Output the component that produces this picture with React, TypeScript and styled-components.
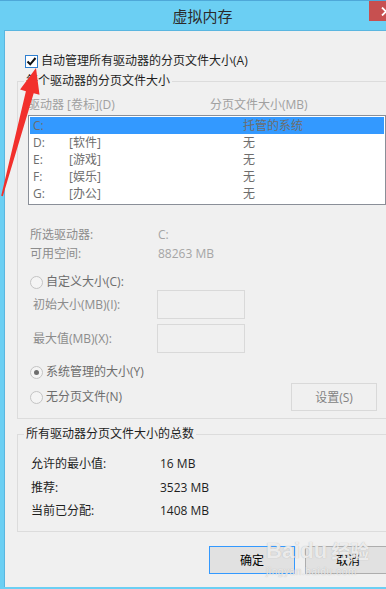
import React from 'react';
import styled, { createGlobalStyle } from 'styled-components';

const GlobalStyle = createGlobalStyle`
	html, body {
		margin: 0;
		padding: 0;
		width: 386px;
		height: 589px;
		overflow: hidden;
		background: #6bcff3;
	}
	body {
		font-family: 'Open Sans', 'Noto Sans CJK SC', sans-serif;
		font-size: 12px;
	}
`;

// the dialog is wider than the screenshot, so its right side is cut off
const Frame = styled.div`
	position: relative;
	width: 386px;
	height: 589px;
	overflow: hidden;
	box-sizing: border-box;
	background: #6bcff3;
	border-top: 1px solid #4ea8d8;
	padding: 0 0 2px 4px;
	display: flex;
	flex-direction: column;
`;

const TitleBar = styled.div`
	height: 29px;
	display: flex;
	align-items: flex-start;
	flex-shrink: 0;
`;

const Title = styled.div`
	flex: 1;
	padding-left: 32px;
	text-align: center;
	font-family: 'Noto Sans CJK SC', sans-serif;
	font-size: 15px;
	line-height: 29px;
	color: #2b2b2b;
`;

const CloseButton = styled.div`
	width: 17px;
	height: 20px;
	overflow: hidden;
	background: #c75050;
	display: flex;
	align-items: center;
	padding-left: 12px;
	box-sizing: border-box;
`;

const Client = styled.div`
	flex: 1;
	min-width: 0;
	overflow: hidden;
	background: #f0f0f0;
	border-top: 1px solid #5ab6e0;
	border-left: 1px solid #5ab6e0;
	padding-left: 12px;
	display: flex;
	flex-direction: column;
`;

const CheckRow = styled.div`
	margin: 22px 0 0 8px;
	height: 16px;
	display: flex;
	align-items: center;
	gap: 3px;
	line-height: 16px;
	color: #1e1e1e;
`;

const CheckBox = styled.span`
	width: 13px;
	height: 13px;
	box-sizing: border-box;
	border: 1px solid #2f7fd0;
	background: #fff;
	display: flex;
	align-items: center;
	justify-content: center;
`;

const Group = styled.fieldset<{ $top: number; $bottom: number }>`
	margin: ${(p) => p.$top}px 0 0 0;
	padding: 0 0 ${(p) => p.$bottom}px 0;
	border: 1px solid #dcdcdc;
	width: 378px;
	min-width: 378px;
	flex-shrink: 0;
	box-sizing: border-box;
	display: flex;
	flex-direction: column;
`;

const Legend = styled.legend`
	margin-left: 6px;
	padding: 0 2px;
	line-height: 16px;
	color: #1e1e1e;
`;

const ListHeader = styled.div`
	margin: 8px 0 0 10px;
	display: grid;
	grid-template-columns: 182px 1fr;
	line-height: 16px;
	color: #a0a0a0;
`;

const ListBox = styled.div`
	margin: 2px 0 0 10px;
	width: 358px;
	height: 90px;
	box-sizing: border-box;
	border: 1px solid #8a8f98;
	background: #fff;
	padding: 1px;
`;

const ListRow = styled.div<{ $selected?: boolean }>`
	height: 17px;
	line-height: 17px;
	padding-left: 3px;
	display: grid;
	grid-template-columns: 36px 174px 1fr;
	color: #6d6d6d;
	background: ${(p) => (p.$selected ? '#3399ff' : 'transparent')};
`;

const InfoRow = styled.div<{ $top: number; $width: number; $indent: number; $dark?: boolean }>`
	margin-top: ${(p) => p.$top}px;
	padding-left: ${(p) => p.$indent}px;
	display: grid;
	grid-template-columns: ${(p) => p.$width}px 1fr;
	line-height: 16px;
	color: ${(p) => (p.$dark ? '#1e1e1e' : '#8c8c8c')};
`;

const InfoValue = styled.span<{ $dark?: boolean }>`
	color: ${(p) => (p.$dark ? '#1e1e1e' : '#a5a5a5')};
`;

const RadioRow = styled.div<{ $top: number }>`
	margin-top: ${(p) => p.$top}px;
	padding-left: 12px;
	display: flex;
	align-items: center;
	gap: 3px;
	line-height: 16px;
	color: #6d6d6d;
`;

const Radio = styled.span<{ $checked?: boolean }>`
	width: 13px;
	height: 13px;
	box-sizing: border-box;
	border-radius: 50%;
	border: 1px solid #c4c4c4;
	background: #f4f4f4;
	display: flex;
	align-items: center;
	justify-content: center;

	&::after {
		content: '';
		display: ${(p) => (p.$checked ? 'block' : 'none')};
		width: 5px;
		height: 5px;
		border-radius: 50%;
		background: #6d6d6d;
	}
`;

const RadioLabel = styled.span`
	margin-left: 3px;
	line-height: 16px;
	color: #6d6d6d;
`;

const InputRow = styled.div<{ $top: number }>`
	margin-top: ${(p) => p.$top}px;
	padding-left: 15px;
	height: 29px;
	display: flex;
	align-items: center;
	color: #8c8c8c;
`;

const InputLabel = styled.span`
	width: 124px;
	line-height: 16px;
`;

const InputBox = styled.div`
	width: 88px;
	height: 29px;
	box-sizing: border-box;
	border: 1px solid #d9d9d9;
	background: #f0f0f0;
`;

const LastRow = styled.div`
	margin-top: 3px;
	padding-left: 12px;
	display: flex;
	align-items: center;
`;

const SetButton = styled.div`
	margin: 0 17px 0 auto;
	width: 86px;
	height: 28px;
	box-sizing: border-box;
	border: 1px solid #d9d9d9;
	background: #f0f0f0;
	color: #838383;
	display: flex;
	align-items: center;
	justify-content: center;
`;

const Totals = styled.div`
	margin-top: 14px;
	display: flex;
	flex-direction: column;
	gap: 7.5px;
`;

const Footer = styled.div`
	margin-top: 14px;
	padding-left: 192px;
	display: flex;
	gap: 10px;
`;

const DialogButton = styled.div<{ $focused?: boolean }>`
	flex-shrink: 0;
	width: 86px;
	height: 28px;
	box-sizing: border-box;
	border: 1px solid ${(p) => (p.$focused ? '#3399ff' : '#adadad')};
	background: #e1e1e1;
	color: #000;
	display: flex;
	align-items: center;
	justify-content: center;
`;

const Arrow = styled.svg`
	position: absolute;
	left: 0;
	top: 0;
	pointer-events: none;
`;

const Watermark = styled.div`
	position: absolute;
	left: 266px;
	top: 537px;
	display: flex;
	flex-direction: column;
	align-items: flex-start;
	pointer-events: none;
	color: rgba(246, 246, 246, 0.85);
	text-shadow: 0 0 1px rgba(150, 150, 150, 0.7);
`;

const MarkLogo = styled.div`
	display: flex;
	align-items: flex-end;
	font-family: 'Liberation Sans', sans-serif;
	font-weight: bold;
	font-size: 22px;
	line-height: 26px;
`;

const MarkCn = styled.span`
	font-family: 'Noto Sans CJK SC', sans-serif;
	font-size: 19px;
	margin-left: 4px;
`;

const MarkUrl = styled.div`
	margin-top: 3px;
	font-family: 'Liberation Sans', sans-serif;
	font-size: 10px;
	line-height: 10px;
	letter-spacing: 0.6px;
`;

const drives = [
	{ name: 'C:', label: '', size: '托管的系统', selected: true },
	{ name: 'D:', label: '[软件]', size: '无' },
	{ name: 'E:', label: '[游戏]', size: '无' },
	{ name: 'F:', label: '[娱乐]', size: '无' },
	{ name: 'G:', label: '[办公]', size: '无' },
];

function App() {
	return (
		<Frame>
			<GlobalStyle />
			<TitleBar>
				<Title>虚拟内存</Title>
				<CloseButton>
					<svg width="10" height="9" viewBox="0 0 10 9" style={{ flexShrink: 0 }}>
						<path d="M1 0.5L9 8.5M9 0.5L1 8.5" stroke="#fff" strokeWidth="1.8" />
					</svg>
				</CloseButton>
			</TitleBar>
			<Client>
				<CheckRow>
					<CheckBox>
						<svg width="11" height="11" viewBox="0 0 11 11">
							<path d="M1.5 5.5L4.2 8.3L9.5 2" stroke="#111" strokeWidth="2" fill="none" />
						</svg>
					</CheckBox>
					<span>自动管理所有驱动器的分页文件大小(A)</span>
				</CheckRow>

				<Group $top={4} $bottom={7}>
					<Legend>每个驱动器的分页文件大小</Legend>
					<ListHeader>
						<span>驱动器 [卷标](D)</span>
						<span>分页文件大小(MB)</span>
					</ListHeader>
					<ListBox>
						{drives.map((d) => (
							<ListRow key={d.name} $selected={d.selected}>
								<span>{d.name}</span>
								<span>{d.label}</span>
								<span>{d.size}</span>
							</ListRow>
						))}
					</ListBox>
					<InfoRow $top={22} $width={128} $indent={12}>
						<span>所选驱动器:</span>
						<InfoValue>C:</InfoValue>
					</InfoRow>
					<InfoRow $top={3} $width={128} $indent={12}>
						<span>可用空间:</span>
						<InfoValue>88263 MB</InfoValue>
					</InfoRow>
					<RadioRow $top={12}>
						<Radio />
						<span>自定义大小(C):</span>
					</RadioRow>
					<InputRow $top={0}>
						<InputLabel>初始大小(MB)(I):</InputLabel>
						<InputBox />
					</InputRow>
					<InputRow $top={5}>
						<InputLabel>最大值(MB)(X):</InputLabel>
						<InputBox />
					</InputRow>
					<RadioRow $top={11}>
						<Radio $checked />
						<span>系统管理的大小(Y)</span>
					</RadioRow>
					<LastRow>
						<Radio />
						<RadioLabel>无分页文件(N)</RadioLabel>
						<SetButton>设置(S)</SetButton>
					</LastRow>
				</Group>

				<Group $top={7} $bottom={12}>
					<Legend>所有驱动器分页文件大小的总数</Legend>
					<Totals>
						<InfoRow $top={0} $width={129} $indent={13} $dark>
							<span>允许的最小值:</span>
							<InfoValue $dark>16 MB</InfoValue>
						</InfoRow>
						<InfoRow $top={0} $width={129} $indent={13} $dark>
							<span>推荐:</span>
							<InfoValue $dark>3523 MB</InfoValue>
						</InfoRow>
						<InfoRow $top={0} $width={129} $indent={13} $dark>
							<span>当前已分配:</span>
							<InfoValue $dark>1408 MB</InfoValue>
						</InfoRow>
					</Totals>
				</Group>

				<Footer>
					<DialogButton $focused>确定</DialogButton>
					<DialogButton>取消</DialogButton>
				</Footer>
			</Client>

			<Watermark>
				<MarkLogo>
					<span>Bai</span>
					<span>du</span>
					<MarkCn>经验</MarkCn>
				</MarkLogo>
				<MarkUrl>jingyan.baidu.com</MarkUrl>
			</Watermark>

			<Arrow width="60" height="200" viewBox="0 0 60 200">
				<polygon
					points="36,67 39.5,93.8 33.7,92.2 2.8,195.2 1.2,194.8 25.9,90.2 20.1,88.6"
					fill="#f2302c"
				/>
			</Arrow>
		</Frame>
	);
}

export default App;
